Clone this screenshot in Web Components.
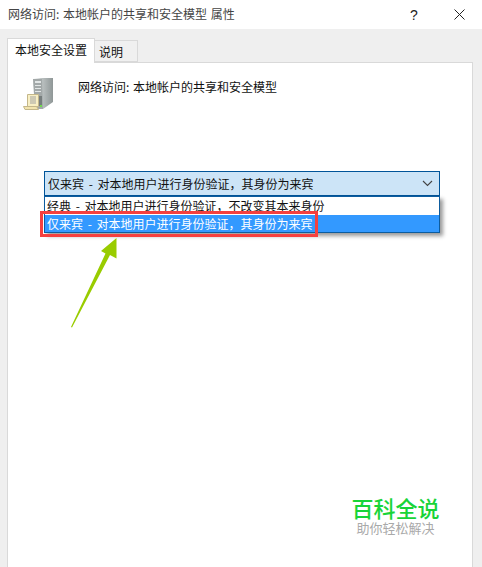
<!DOCTYPE html>
<html lang="zh">
<head>
<meta charset="utf-8">
<title>属性</title>
<style>
  html, body { margin: 0; padding: 0; background: #efefef; }
  body { font: 12px "Noto Sans CJK SC", "Liberation Sans", sans-serif; color: #111; }
</style>
</head>
<body>
<dialog-window></dialog-window>

<script>
class TitleBar extends HTMLElement {
  constructor() {
    super();
    this.attachShadow({mode: 'open'}).innerHTML = `
      <style>
        :host { display: flex; align-items: center; height: 29px; background: #fff; padding-left: 8px; color: #444; }
        .name { flex: 1; line-height: 27px; padding-bottom: 2px; word-spacing: 1px; }
        .help { width: 18px; text-align: center; font: 14px "Liberation Sans", sans-serif; color: #222; margin-right: 31px; }
        svg { display: block; margin-right: 17px; }
      </style>
      <span class="name"><slot></slot></span>
      <span class="help">?</span>
      <svg width="11" height="11" viewBox="0 0 11 11"><path d="M.5.5l10 10M10.5.5l-10 10" stroke="#222" fill="none"/></svg>
    `;
  }
}
customElements.define('title-bar', TitleBar);

class TabStrip extends HTMLElement {
  constructor() {
    super();
    this.attachShadow({mode: 'open'}).innerHTML = `
      <style>
        :host { display: flex; align-items: flex-end; height: 34px; padding-left: 7px; position: relative; z-index: 1; margin-bottom: -1px; }
        .tab { box-sizing: border-box; border: 1px solid #d9d9d9; }
        .on { width: 88px; height: 25px; line-height: 21px; background: #fff; border-bottom: 0; text-align: center; }
        .off { width: 44px; height: 22px; line-height: 21px; background: #f0f0f0; margin-left: -1px; margin-bottom: 1px; padding-left: 4px; }
      </style>
      <div class="tab on">本地安全设置</div>
      <div class="tab off">说明</div>
    `;
  }
}
customElements.define('tab-strip', TabStrip);

class ServerIcon extends HTMLElement {
  constructor() {
    super();
    this.attachShadow({mode: 'open'}).innerHTML = `
      <style>:host { display: block; width: 32px; height: 33px; } svg { display: block; }</style>
      <svg width="32" height="33" viewBox="0 0 32 33">
        <defs>
          <linearGradient id="side" x1="0" x2="1" y1="0" y2="0"><stop offset="0" stop-color="#e0e4e4"/><stop offset="1" stop-color="#8f9797"/></linearGradient>
        </defs>
        <path d="M10 1l8-1h12v24l-10 7h-8z" fill="url(#side)"/>
        <path d="M10 1h9l1 30h-8z" fill="#a2a8a8"/>
        <path d="M12 3h6v2h-6zM12 7h6v1h-6zM12 10h6v1h-6zM12 13h6v1h-6z" fill="#e2e6e6"/>
        <path d="M14 18h5v10h-5z" fill="#767d7d"/>
        <rect x="17" y="27" width="2" height="2" fill="#6fdc4c"/>
        <path d="M4.500 16.500h11v12h-11z" fill="#f8efc4" stroke="#c4b78a"/>
        <path d="M7 19h6M7 21h6M7 23h6M7 25h6" stroke="#a3a3a3"/>
        <path d="M.5 28.500h13l2 3H2z" fill="#f2e4ae" stroke="#c4b78a"/>
      </svg>
    `;
  }
}
customElements.define('server-icon', ServerIcon);

class ComboBox extends HTMLElement {
  constructor() {
    super();
    this.attachShadow({mode: 'open'}).innerHTML = `
      <style>
        :host { display: flex; align-items: center; box-sizing: border-box; height: 25px; padding: 0 4px 0 3px; background: #cce4f7; border: 1px solid #005499; }
        span { flex: 1; line-height: 23px; word-spacing: 2px; }
        svg { display: block; margin-right: 2px; }
      </style>
      <span><slot></slot></span>
      <svg width="11" height="7" viewBox="0 0 11 7"><path d="M1 1l4.500 4.500L10 1" fill="none" stroke="#444" stroke-width="1.100"/></svg>
    `;
  }
}
customElements.define('combo-box', ComboBox);

class DropList extends HTMLElement {
  constructor() {
    super();
    this.attachShadow({mode: 'open'}).innerHTML = `
      <style>
        :host { display: block; box-sizing: border-box; height: 37px; background: #fff; border: 1px solid #0d5c9e; box-shadow: 3px 3px 4px rgba(0,0,0,.4); }
        div { height: 17.5px; line-height: 17px; padding-left: 2px; white-space: nowrap; word-spacing: 2px; }
        .sel { background: #3399ff; color: #fff; }
      </style>
      <div>经典 - 对本地用户进行身份验证，不改变其本来身份</div>
      <div class="sel">仅来宾 - 对本地用户进行身份验证，其身份为来宾</div>
    `;
  }
}
customElements.define('drop-list', DropList);

class BrandMark extends HTMLElement {
  constructor() {
    super();
    this.attachShadow({mode: 'open'}).innerHTML = `
      <style>
        :host { display: flex; flex-direction: column; align-items: center; position: absolute; left: 345px; top: 494px; width: 101px; }
        b { font-size: 22px; line-height: 26px; font-weight: 500; color: #18d438; }
        span { font-size: 13px; line-height: 16px; color: #a9a9a9; }
      </style>
      <b>百科全说</b>
      <span>助你轻松解决</span>
    `;
  }
}
customElements.define('brand-mark', BrandMark);

class CallOut extends HTMLElement {
  constructor() {
    super();
    // the red box and green arrow were painted over the screenshot
    this.attachShadow({mode: 'open'}).innerHTML = `
      <style>
        :host { display: block; position: absolute; left: 0; top: 0; width: 482px; height: 567px; pointer-events: none; }
        .box { position: absolute; box-sizing: border-box; left: 40px; top: 211px; width: 278px; height: 26px; border: 3px solid #f5403f; }
        svg { position: absolute; left: 0; top: 0; }
      </style>
      <div class="box"></div>
      <svg width="482" height="567"><path d="M116.500 238L101 251l4.500 2.500L71 327l1 .5L110 255l6.500 3.500z" fill="#99cc00"/></svg>
    `;
  }
}
customElements.define('call-out', CallOut);

class DialogWindow extends HTMLElement {
  constructor() {
    super();
    this.attachShadow({mode: 'open'}).innerHTML = `
      <style>
        :host { display: block; position: relative; width: 482px; height: 567px; overflow: hidden; background: #efefef; }
        .panel { box-sizing: border-box; margin: 0 9px 0 7px; height: 505px; background: #fff; border: 1px solid #d9d9d9; border-bottom: 0; padding: 15px 0 0 15px; }
        .head { display: flex; height: 93px; }
        .head p { margin: -1px 0 0 23px; line-height: 20px; word-spacing: 1px; }
        .field { margin: 0 32px 0 21px; }
      </style>
      <title-bar>网络访问: 本地帐户的共享和安全模型 属性</title-bar>
      <tab-strip></tab-strip>
      <div class="panel">
        <div class="head">
          <server-icon></server-icon>
          <p>网络访问: 本地帐户的共享和安全模型</p>
        </div>
        <div class="field">
          <combo-box>仅来宾 - 对本地用户进行身份验证，其身份为来宾</combo-box>
          <drop-list></drop-list>
        </div>
      </div>
      <call-out></call-out>
      <brand-mark></brand-mark>
    `;
  }
}
customElements.define('dialog-window', DialogWindow);
</script>
</body>
</html>
